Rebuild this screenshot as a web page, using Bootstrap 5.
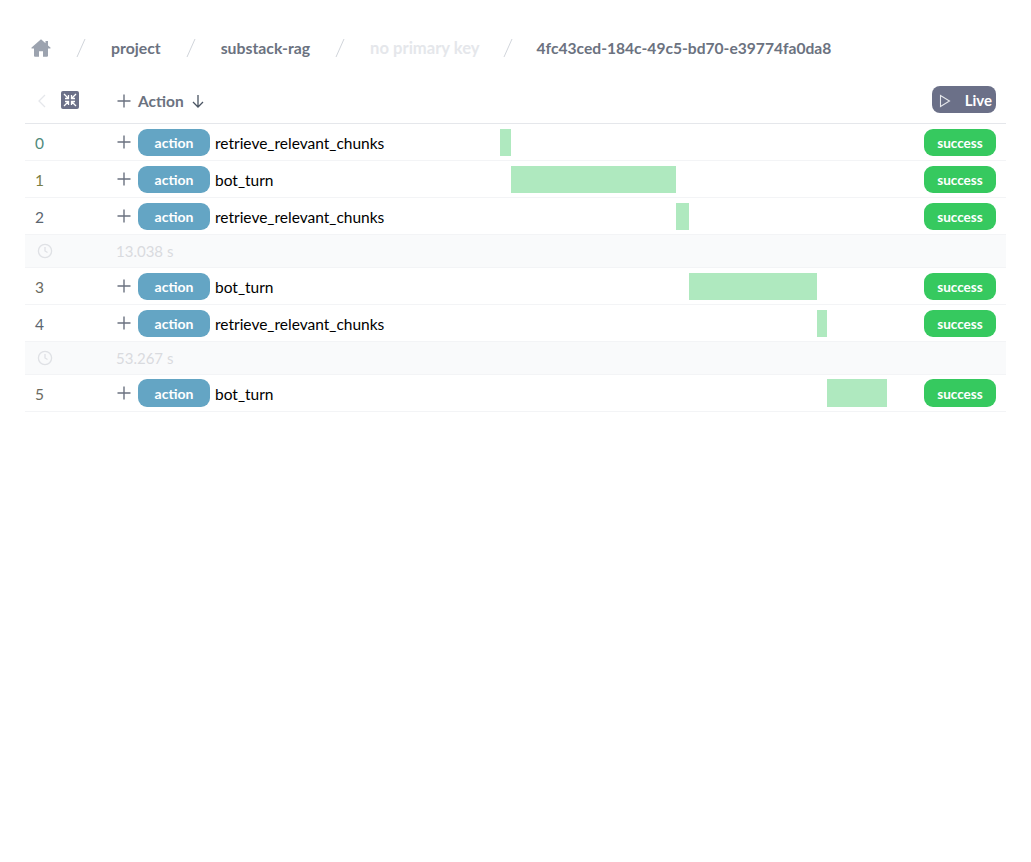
<!doctype html>
<html lang="en">
<head>
<meta charset="utf-8">
<title>substack-rag</title>
<link rel="stylesheet" href="https://cdn.jsdelivr.net/npm/bootstrap@5.3.0/dist/css/bootstrap.min.css">
<style>
body{font-family:"Lato","Noto Sans",sans-serif;color:#000;background:#fff;font-size:15.5px}
.page-wrap{padding:36px 25px 0 25px}
.crumbs{height:24px;padding-left:6px;font-weight:700;font-size:15.8px;color:#6b7280;white-space:nowrap;margin-bottom:19px}
.crumb-home{width:20px;height:20px;flex:none;fill:#9ca3af}
.crumb-sep{width:10px;height:20px;flex:none;margin:0 25px;stroke:#d1d5db;stroke-width:1;fill:none}
.crumb-sep-last{margin:0 24px 0 23px}
.crumb-off{color:#e5e7eb;font-size:16.6px}
.crumb-id{font-size:15.6px;padding-top:1px}
.trace-table{width:981px;table-layout:fixed;border-collapse:separate;border-spacing:0}
.trace-table td,.trace-table th{padding:0;vertical-align:middle;border-bottom:1px solid #f3f4f6}
.head-row th{height:45px;border-bottom:1px solid #e5e7eb;font-weight:700;color:#6b7280;font-size:15.5px}
.col-idx{width:91px}
.col-name{width:384px}
.col-bars{width:391px}
.step-row td{height:37px}
.gap-row td{height:33px;background:#f9fafb;color:#d9dbdf;font-size:15px;border-bottom:1px solid #f3f4f6}
.idx-cell{padding:3px 0 0 10px!important}
.clock-cell{padding-left:12px!important}
.ico-back{margin-left:1px}
.ico-fit{margin:-2px 0 0 11px}
.plus-ico{width:16px;height:16px;stroke:#6b7280;stroke-width:1.4;fill:none;flex:none;margin-right:6px}
.head-label{margin-right:7px;padding-top:2px}
.name-text{margin-left:5px;padding-top:3px}
.pill-action,.pill-ok{display:inline-flex;align-items:center;justify-content:center;height:27px;border-radius:9px;color:#fff;font-weight:700;font-size:14px;line-height:1;padding-top:2px}
.pill-action{width:72px;background:#64a5c4}
.pill-ok{width:72px;background:#36c95f;font-size:13.5px;padding-top:4px}
.pill-live{display:inline-flex;align-items:center;height:27px;width:64px;border-radius:8px;background:#6b7088;color:#fff;font-weight:700;font-size:15px;padding:2px 0 0 7px;margin-bottom:3px}
.bar-track{height:27px}
.bar-fill{height:27px;background:#afe9bf}
.end-cell{padding-right:10px!important}
.tall-row .pill-action,.tall-row .pill-ok,.tall-row .bar-track,.tall-row .bar-fill{height:28px}
.tone-a{color:#4f8a7c}.tone-b{color:#7a7f45}.tone-c{color:#5b6670}.tone-d{color:#6b6b5f}
</style>
</head>
<body>
<div class="page-wrap">
  <nav class="crumbs d-flex align-items-center">
    <svg class="crumb-home" viewBox="0 0 20 20"><path d="M10 1.200 .6 9.600c-.4.400-.1 1 .4 1H3v7.200c0 .5.400.9.900.9H8v-5.500h4v5.500h4.100c.5 0 .9-.4.900-.9v-7.200h2c.5 0 .8-.6.400-1l-2.400-2.200V3h-2.500v2.200z"/></svg>
    <svg class="crumb-sep" viewBox="0 0 10 20"><path d="M1 19 9 1"/></svg>
    <span>project</span>
    <svg class="crumb-sep" viewBox="0 0 10 20"><path d="M1 19 9 1"/></svg>
    <span>substack-rag</span>
    <svg class="crumb-sep" viewBox="0 0 10 20"><path d="M1 19 9 1"/></svg>
    <span class="crumb-off">no primary key</span>
    <svg class="crumb-sep crumb-sep-last" viewBox="0 0 10 20"><path d="M1 19 9 1"/></svg>
    <span class="crumb-id">4fc43ced-184c-49c5-bd70-e39774fa0da8</span>
  </nav>
  <table class="trace-table">
    <colgroup><col class="col-idx"><col class="col-name"><col class="col-bars"><col></colgroup>
    <tr class="head-row">
      <th>
        <div class="d-flex align-items-center ps-2">
          <svg class="ico-back" width="16" height="16" viewBox="0 0 16 16" fill="none" stroke="#e5e7eb" stroke-width="1.300"><path d="M11 2 5 8l6 6"/></svg>
          <svg class="ico-fit" width="18" height="18" viewBox="0 0 18 18"><rect width="18" height="18" rx="2" fill="#6b7088"/><path d="M3 3 7 7M7.500 4v3.500H4M15 3l-4 4M10.500 4v3.500H14M3 15l4-4M7.500 14v-3.500H4M15 15l-4-4M10.500 14v-3.500H14" stroke="#fff" stroke-width="1.300" fill="none"/></svg>
        </div>
      </th>
      <th><div class="d-flex align-items-center"><svg class="plus-ico" viewBox="0 0 16 16"><path d="M8 1.500v13M1.500 8h13"/></svg><span class="head-label">Action</span><svg width="14" height="16" viewBox="0 0 14 16" fill="none" stroke="#4b5563" stroke-width="1.300"><path d="M7 2v12M2 9l5 5 5-5"/></svg></div></th>
      <th></th>
      <th class="end-cell"><div class="d-flex justify-content-end"><span class="pill-live"><svg width="12" height="14" viewBox="0 0 12 14" fill="none" stroke="#e5e7eb" stroke-width="1.100"><path d="M1.500 1.500v11l9-5.500z"/></svg><span class="ms-auto pe-1">Live</span></span></div></th>
    </tr>
    <tr class="step-row">
      <td class="idx-cell tone-a">0</td>
      <td><div class="d-flex align-items-center"><svg class="plus-ico" viewBox="0 0 16 16"><path d="M8 1.500v13M1.500 8h13"/></svg><span class="pill-action">action</span><span class="name-text">retrieve_relevant_chunks</span></div></td>
      <td><div class="bar-track"><div class="bar-fill" style="margin-left:0;width:11px"></div></div></td>
      <td class="end-cell"><div class="d-flex justify-content-end"><span class="pill-ok">success</span></div></td>
    </tr>
    <tr class="step-row">
      <td class="idx-cell tone-b">1</td>
      <td><div class="d-flex align-items-center"><svg class="plus-ico" viewBox="0 0 16 16"><path d="M8 1.500v13M1.500 8h13"/></svg><span class="pill-action">action</span><span class="name-text">bot_turn</span></div></td>
      <td><div class="bar-track"><div class="bar-fill" style="margin-left:11px;width:165px"></div></div></td>
      <td class="end-cell"><div class="d-flex justify-content-end"><span class="pill-ok">success</span></div></td>
    </tr>
    <tr class="step-row">
      <td class="idx-cell tone-c">2</td>
      <td><div class="d-flex align-items-center"><svg class="plus-ico" viewBox="0 0 16 16"><path d="M8 1.500v13M1.500 8h13"/></svg><span class="pill-action">action</span><span class="name-text">retrieve_relevant_chunks</span></div></td>
      <td><div class="bar-track"><div class="bar-fill" style="margin-left:176px;width:13px"></div></div></td>
      <td class="end-cell"><div class="d-flex justify-content-end"><span class="pill-ok">success</span></div></td>
    </tr>
    <tr class="gap-row">
      <td class="clock-cell"><div class="d-flex"><svg width="16" height="16" viewBox="0 0 16 16" fill="none" stroke="#dfe1e5" stroke-width="1.300"><circle cx="8" cy="8" r="6.600"/><path d="M8 4v4l2.500 1.500"/></svg></div></td>
      <td colspan="3">13.038 s</td>
    </tr>
    <tr class="step-row">
      <td class="idx-cell tone-d">3</td>
      <td><div class="d-flex align-items-center"><svg class="plus-ico" viewBox="0 0 16 16"><path d="M8 1.500v13M1.500 8h13"/></svg><span class="pill-action">action</span><span class="name-text">bot_turn</span></div></td>
      <td><div class="bar-track"><div class="bar-fill" style="margin-left:189px;width:128px"></div></div></td>
      <td class="end-cell"><div class="d-flex justify-content-end"><span class="pill-ok">success</span></div></td>
    </tr>
    <tr class="step-row">
      <td class="idx-cell tone-c">4</td>
      <td><div class="d-flex align-items-center"><svg class="plus-ico" viewBox="0 0 16 16"><path d="M8 1.500v13M1.500 8h13"/></svg><span class="pill-action">action</span><span class="name-text">retrieve_relevant_chunks</span></div></td>
      <td><div class="bar-track"><div class="bar-fill" style="margin-left:317px;width:10px"></div></div></td>
      <td class="end-cell"><div class="d-flex justify-content-end"><span class="pill-ok">success</span></div></td>
    </tr>
    <tr class="gap-row">
      <td class="clock-cell"><div class="d-flex"><svg width="16" height="16" viewBox="0 0 16 16" fill="none" stroke="#dfe1e5" stroke-width="1.300"><circle cx="8" cy="8" r="6.600"/><path d="M8 4v4l2.500 1.500"/></svg></div></td>
      <td colspan="3">53.267 s</td>
    </tr>
    <tr class="step-row tall-row">
      <td class="idx-cell tone-d">5</td>
      <td><div class="d-flex align-items-center"><svg class="plus-ico" viewBox="0 0 16 16"><path d="M8 1.500v13M1.500 8h13"/></svg><span class="pill-action">action</span><span class="name-text">bot_turn</span></div></td>
      <td><div class="bar-track"><div class="bar-fill" style="margin-left:327px;width:60px"></div></div></td>
      <td class="end-cell"><div class="d-flex justify-content-end"><span class="pill-ok">success</span></div></td>
    </tr>
  </table>
</div>
<script src="https://cdn.jsdelivr.net/npm/bootstrap@5.3.0/dist/js/bootstrap.bundle.min.js"></script>
</body>
</html>
